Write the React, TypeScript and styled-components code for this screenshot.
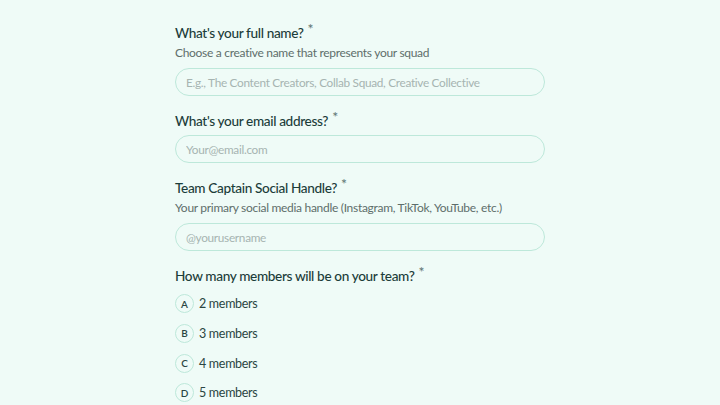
import React from "react";
import styled, { createGlobalStyle } from "styled-components";

const Global = createGlobalStyle`
  html, body { margin: 0; padding: 0; background: #effbf7; }
  body { font-family: Lato, "Open Sans", sans-serif; -webkit-font-smoothing: antialiased; }
  * { box-sizing: border-box; }
`;

const Page = styled.div`
  min-height: 405px;
  background: #effbf7;
  padding-top: 23px;
  display: flex;
  justify-content: center;
`;

const Form = styled.div`
  width: 370px;
  display: flex;
  flex-direction: column;
  gap: 15px;
`;

const Field = styled.div`
  display: flex;
  flex-direction: column;
`;

const Label = styled.div`
  font-size: 13.6px;
  line-height: 20px;
  color: #1c3d3a;
  letter-spacing: -0.35px;
  font-weight: 500;
  white-space: nowrap;
`;

const Star = styled.span`
  color: #5d7471;
  font-size: 14px;
  position: relative;
  top: -4px;
  margin-left: 4px;
`;

const Helper = styled.div`
  font-size: 12px;
  line-height: 18px;
  color: #5e6e6b;
  letter-spacing: -0.3px;
  margin-top: 1px;
  white-space: nowrap;
`;

const Input = styled.input<{ $gap: number }>`
  margin-top: ${(p) => p.$gap}px;
  height: 28px;
  width: 100%;
  border: 1px solid #bde8da;
  border-radius: 14px;
  background: transparent;
  padding: 0 10px;
  font-family: inherit;
  font-size: 11.8px;
  letter-spacing: -0.3px;
  color: #1f3d3a;
  outline: none;
  &::placeholder { color: #a6b4b1; }
`;

const Options = styled.div`
  display: flex;
  flex-direction: column;
  gap: 10.8px;
  margin-top: 8px;
`;

const Option = styled.div`
  display: flex;
  align-items: center;
  gap: 5px;
  height: 19px;
`;

const Key = styled.span`
  width: 19px;
  height: 19px;
  border-radius: 50%;
  border: 1px solid #bde8da;
  display: flex;
  align-items: center;
  justify-content: center;
  font-size: 10px;
  font-weight: 600;
  color: #2a4542;
`;

const OptionText = styled.span`
  font-size: 12.5px;
  color: #2a4542;
  letter-spacing: -0.3px;
`;

export default function App() {
  return (
    <>
      <Global />
      <Page>
        <Form>
          <Field>
            <Label>What's your full name?<Star>*</Star></Label>
            <Helper>Choose a creative name that represents your squad</Helper>
            <Input $gap={6} placeholder="E.g., The Content Creators, Collab Squad, Creative Collective" />
          </Field>
          <Field>
            <Label>What's your email address?<Star>*</Star></Label>
            <Input $gap={4} placeholder="Your@email.com" />
          </Field>
          <Field>
            <Label>Team Captain Social Handle?<Star>*</Star></Label>
            <Helper>Your primary social media handle (Instagram, TikTok, YouTube, etc.)</Helper>
            <Input $gap={6} placeholder="@yourusername" />
          </Field>
          <Field>
            <Label>How many members will be on your team?<Star>*</Star></Label>
            <Options>
              {["2 members", "3 members", "4 members", "5 members"].map((t, i) => (
                <Option key={t}>
                  <Key>{"ABCD"[i]}</Key>
                  <OptionText>{t}</OptionText>
                </Option>
              ))}
            </Options>
          </Field>
        </Form>
      </Page>
    </>
  );
}
